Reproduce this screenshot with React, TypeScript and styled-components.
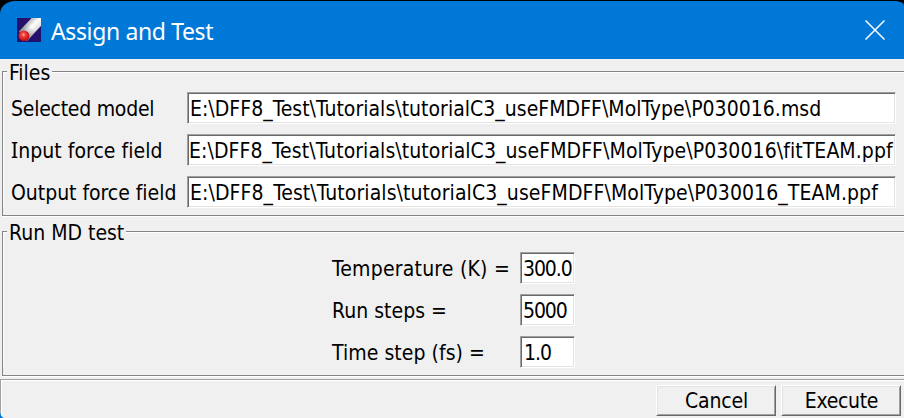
import React from "react";
import styled, { createGlobalStyle } from "styled-components";

const GlobalStyle = createGlobalStyle`
  * { box-sizing: border-box; }
  body {
    margin: 0;
    background: #000;
    overflow: hidden;
  }
`;

const Dialog = styled.div`
  width: 904px;
  height: 417px;
  margin-top: 1px;
  display: flex;
  flex-direction: column;
  overflow: hidden;
  border-radius: 15px 10px 0 0 / 13px 4px 0 0;
  background: #0078d7;
  color: #000;
  font-family: "DejaVu Sans Condensed", "DejaVu Sans", sans-serif;
  font-stretch: condensed;
  font-size: 21px;
  white-space: pre;
`;

const TitleBar = styled.header`
  flex: none;
  height: 58px;
  display: flex;
  align-items: center;
  padding: 0 19px 0 17px;
  color: #fff;
`;

const Title = styled.h1`
  flex: 1;
  margin: 2px 0 0 10px;
  font: 400 23px/30px "Noto Sans", "Open Sans", sans-serif;
  letter-spacing: -0.37px;
`;

const CloseButton = styled.button`
  display: flex;
  padding: 0;
  border: 0;
  background: none;
`;

const Content = styled.main`
  flex: 1;
  display: flex;
  flex-direction: column;
  padding: 3px 0 0;
  border-radius: 0 0 0 4px / 0 0 0 9px;
  background: #f0f0f0;
  overflow: hidden;
`;

const Group = styled.fieldset`
  flex: none;
  min-width: 0;
  height: 154px;
  margin: 0 -2px 0 2px;
  padding: 0;
  border: 1px solid #848484;
  display: flex;
  flex-direction: column;
`;

const Legend = styled.legend<{ $width: number }>`
  position: relative;
  height: 19px;
  width: ${(p) => p.$width}px;
  margin-left: 4px;
  padding: 0 0 0 2px;
  background: #f0f0f0;
  line-height: 22px;
`;

const GroupBody = styled.div`
  flex: 1;
  display: grid;
  grid-auto-rows: 31px;
  row-gap: 11px;
  margin-top: -9px;
  border: solid #fff;
  border-width: 1px 0 0 1px;
`;

const GroupEdge = styled.div<{ $gap: number }>`
  height: 1px;
  flex: none;
  margin: 0 0 ${(p) => p.$gap}px 2px;
  background: #fff;
`;

const FileGrid = styled(GroupBody)`
  grid-template-columns: 176px 709px;
  padding: 19px 0 0 7px;
`;

const RunGrid = styled(GroupBody)`
  grid-template-columns: 188px 55px;
  padding: 19px 0 0 328px;
`;

const Label = styled.label<{ $spacing?: number }>`
  padding-top: 2px;
  line-height: 31px;
  letter-spacing: ${(p) => p.$spacing ?? 0}px;
`;

const SerifCap = styled.span`
  font-family: "Noto Sans", sans-serif;
  line-height: 1;
`;

const Field = styled.div<{ $spacing: number; $indent: number }>`
  height: 32px;
  padding-left: ${(p) => p.$indent}px;
  border: 1px solid;
  border-color: #a0a0a0 #fff #fff #a0a0a0;
  background: #fff;
  box-shadow: inset 1px 1px #696969, inset -1px -1px #e3e3e3;
  line-height: 33px;
  letter-spacing: ${(p) => p.$spacing}px;
  overflow: hidden;
`;

const Footer = styled.footer`
  flex: 1;
  display: flex;
  justify-content: flex-end;
  gap: 5px;
  padding: 5px 3px 0 0;
  border: solid #a0a0a0;
  border-width: 1px 0 0 1px;
  box-shadow: inset 1px 1px #fff;
`;

const PushButton = styled.button<{ $spacing: number }>`
  width: 120px;
  height: 31px;
  padding: 0 0 0 1px;
  border: 1px solid;
  border-color: #fff #696969 #696969 #fff;
  background: #f0f0f0;
  box-shadow: inset 1px 1px #e3e3e3, inset -1px -1px #a0a0a0;
  color: #000;
  font: inherit;
  line-height: 28px;
  letter-spacing: ${(p) => p.$spacing}px;
`;

const AppIcon = () => (
  <svg width="24" height="24" viewBox="0 0 24 24">
    <defs>
      <linearGradient id="rod" x1="8" y1="7" x2="18" y2="17" gradientUnits="userSpaceOnUse">
        <stop offset="0" stopColor="#b8b8bc" />
        <stop offset=".4" stopColor="#fff" />
        <stop offset=".75" stopColor="#e4e4e4" />
        <stop offset="1" stopColor="#a0a0a8" />
      </linearGradient>
      <linearGradient id="shade" x1="4" y1="20" x2="15" y2="9" gradientUnits="userSpaceOnUse">
        <stop offset="0" stopColor="#555" stopOpacity=".8" />
        <stop offset="1" stopColor="#777" stopOpacity="0" />
      </linearGradient>
      <radialGradient id="ball" cx=".45" cy=".4" r=".65">
        <stop offset="0" stopColor="#ffc0b8" />
        <stop offset=".25" stopColor="#f34a40" />
        <stop offset=".7" stopColor="#d5171a" />
        <stop offset="1" stopColor="#900a20" />
      </radialGradient>
    </defs>
    <path fill="#24106c" d="M0 0h24v24H0z" />
    <path fill="url(#rod)" d="M2 13.5 14.5 0H24v8L10 23z" />
    <path fill="url(#shade)" d="M2 13.5 14.5 0H24v8L10 23z" />
    <circle cx="7" cy="17.8" r="5.4" fill="url(#ball)" />
  </svg>
);

const files = [
  { label: "Selected model", labelSpacing: -0.25, value: "E:\\DFF8_Test\\Tutorials\\tutorialC3_useFMDFF\\MolType\\P030016.msd", spacing: 0.03, indent: 2 },
  { label: "Input force field", labelSpacing: 0.05, value: "E:\\DFF8_Test\\Tutorials\\tutorialC3_useFMDFF\\MolType\\P030016\\fitTEAM.ppf", spacing: 0.08, indent: 1 },
  { label: "Output force field", labelSpacing: -0.03, value: "E:\\DFF8_Test\\Tutorials\\tutorialC3_useFMDFF\\MolType\\P030016_TEAM.ppf", spacing: 0.09, indent: 2 },
];

const settings = [
  { label: "Temperature (K) =", labelSpacing: 0.22, value: "300.0", spacing: -1.1, indent: 2 },
  { label: "Run steps =", labelSpacing: 0.02, value: "5000", spacing: -1.1, indent: 2 },
  { label: "Time step (fs) =", labelSpacing: 0.05, value: "1.0", spacing: -1, indent: 3 },
];

export default function App() {
  return (
    <>
      <GlobalStyle />
      <Dialog>
        <TitleBar>
          <AppIcon />
          <Title>Assign and Test</Title>
          <CloseButton aria-label="Close">
            <svg width="20" height="20" viewBox="0 0 20 20" stroke="#fff" strokeWidth="1.5">
              <path d="M.5.5l19 19M19.5.5l-19 19" />
            </svg>
          </CloseButton>
        </TitleBar>
        <Content>
          <Group>
            <Legend $width={45}>Files</Legend>
            <FileGrid>
              {files.map((f) => (
                <React.Fragment key={f.label}>
                  <Label $spacing={f.labelSpacing}>
                    {f.label[0] === "I" ? <><SerifCap>I</SerifCap>{f.label.slice(1)}</> : f.label}
                  </Label>
                  <Field $spacing={f.spacing} $indent={f.indent}>{f.value}</Field>
                </React.Fragment>
              ))}
            </FileGrid>
          </Group>
          <GroupEdge $gap={5} />
          <Group>
            <Legend $width={119}>Run MD test</Legend>
            <RunGrid>
              {settings.map((s) => (
                <React.Fragment key={s.label}>
                  <Label $spacing={s.labelSpacing}>{s.label}</Label>
                  <Field $spacing={s.spacing} $indent={s.indent}>{s.value}</Field>
                </React.Fragment>
              ))}
            </RunGrid>
          </Group>
          <GroupEdge $gap={2} />
          <Footer>
            <PushButton $spacing={-0.15}>Cancel</PushButton>
            <PushButton $spacing={-0.31}>Execute</PushButton>
          </Footer>
        </Content>
      </Dialog>
    </>
  );
}
